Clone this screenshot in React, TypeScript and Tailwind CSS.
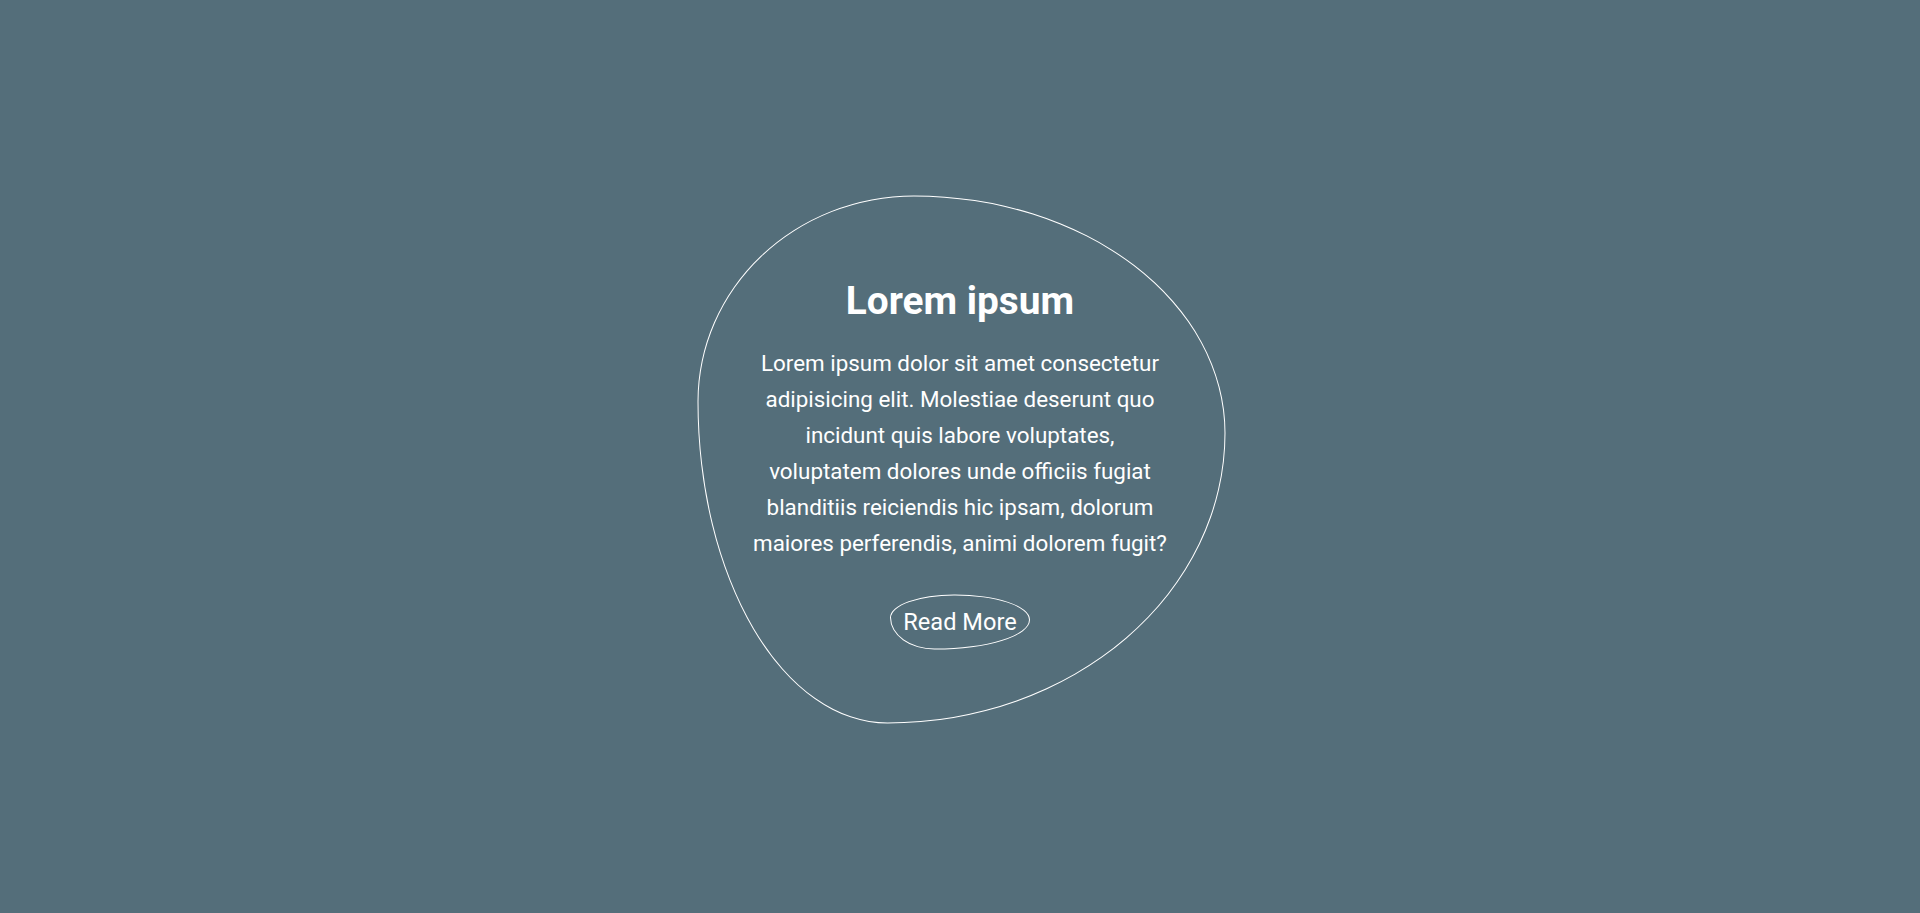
export default function App() {
  return (
    <div
      className="min-h-screen w-full bg-[#546e7a] flex items-center justify-center"
      style={{ fontFamily: "Roboto, 'Liberation Sans', sans-serif" }}
    >
      <div className="w-[528px] h-[528px] translate-x-[1.5px] translate-y-[2.5px] border border-white rounded-[41%_59%_64%_36%/39%_45%_55%_61%] flex flex-col items-center pt-[81px] text-white">
        <div className="flex flex-col items-center -translate-x-[1.5px]">
          <h1 className="text-[38.8px] font-bold leading-[1.172] m-0">Lorem ipsum</h1>
          <p className="w-[420px] mt-[23.5px] text-center text-[22.4px] leading-[1.6]">
            Lorem ipsum dolor sit amet consectetur adipisicing elit. Molestiae deserunt quo incidunt quis labore
            voluptates, voluptatem dolores unde officiis fugiat blanditiis reiciendis hic ipsam, dolorum maiores
            perferendis, animi dolorem fugit?
          </p>
          <button className="mt-[33px] border border-white rounded-[46%_54%_68%_32%/42%_46%_54%_58%] px-[12.5px] py-[13px] text-[23.6px] leading-[1.172] text-white bg-transparent">
            Read More
          </button>
        </div>
      </div>
    </div>
  );
}
